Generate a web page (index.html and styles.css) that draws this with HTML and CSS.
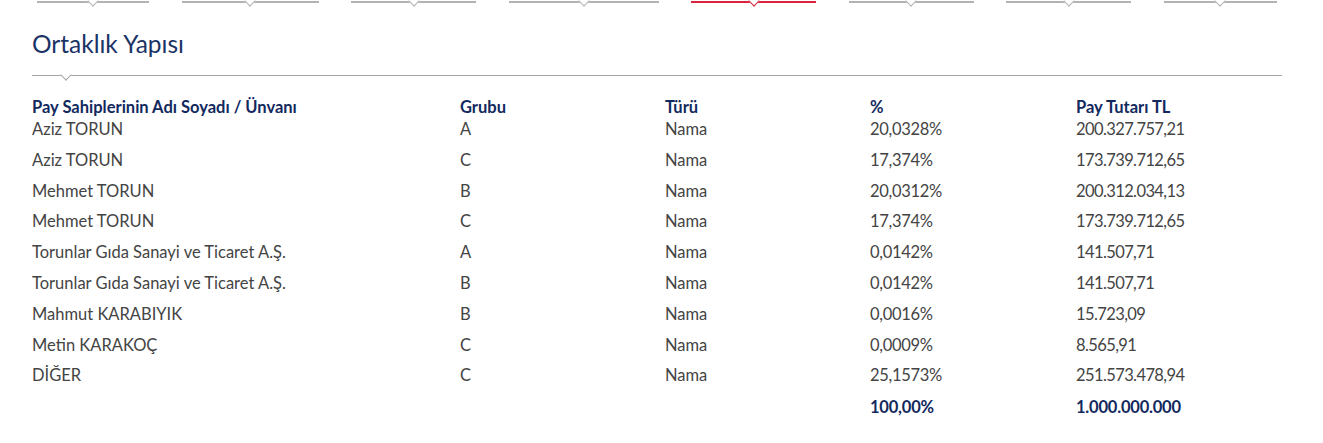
FILE: index.html
```html
<!DOCTYPE html>
<html lang="tr">
<head>
<meta charset="utf-8">
<title>Ortaklık Yapısı</title>
<link rel="stylesheet" href="styles.css">
</head>
<body>
<nav class="tabs">
  <span class="tab w112"></span>
  <span class="tab w137"></span>
  <span class="tab w125"></span>
  <span class="tab w150"></span>
  <span class="tab w125 active"></span>
  <span class="tab w125"></span>
  <span class="tab w125"></span>
  <span class="tab w113"></span>
</nav>
<section class="panel">
  <h2 class="title">Ortaklık Yapısı</h2>
  <div class="divider"></div>
  <table class="grid">
    <thead>
      <tr><th class="c1">Pay Sahiplerinin Adı Soyadı / Ünvanı</th><th class="c2">Grubu</th><th class="c3">Türü</th><th class="c4">%</th><th class="c5">Pay Tutarı TL</th></tr>
    </thead>
    <tbody>
      <tr><td>Aziz TORUN</td><td>A</td><td>Nama</td><td>20,0328%</td><td>200.327.757,21</td></tr>
      <tr><td>Aziz TORUN</td><td>C</td><td>Nama</td><td>17,374%</td><td>173.739.712,65</td></tr>
      <tr><td>Mehmet TORUN</td><td>B</td><td>Nama</td><td>20,0312%</td><td>200.312.034,13</td></tr>
      <tr><td>Mehmet TORUN</td><td>C</td><td>Nama</td><td>17,374%</td><td>173.739.712,65</td></tr>
      <tr><td>Torunlar Gıda Sanayi ve Ticaret A.Ş.</td><td>A</td><td>Nama</td><td>0,0142%</td><td>141.507,71</td></tr>
      <tr><td>Torunlar Gıda Sanayi ve Ticaret A.Ş.</td><td>B</td><td>Nama</td><td>0,0142%</td><td>141.507,71</td></tr>
      <tr><td>Mahmut KARABIYIK</td><td>B</td><td>Nama</td><td>0,0016%</td><td>15.723,09</td></tr>
      <tr><td>Metin KARAKOÇ</td><td>C</td><td>Nama</td><td>0,0009%</td><td>8.565,91</td></tr>
      <tr><td>DİĞER</td><td>C</td><td>Nama</td><td>25,1573%</td><td>251.573.478,94</td></tr>
      <tr class="total"><td></td><td></td><td></td><td>100,00%</td><td>1.000.000.000</td></tr>
    </tbody>
  </table>
</section>
</body>
</html>
```
FILE: styles.css
```css
* { box-sizing: border-box; }
html, body { margin: 0; padding: 0; background: #fff; }
body {
  font-family: Lato, "Open Sans", "Liberation Sans", sans-serif;
  color: #444;
  width: 1323px;
  height: 443px;
  overflow: hidden;
}
.tabs {
  display: flex;
  gap: 32.5px;
  padding-left: 37px;
  height: 8px;
}
.tab {
  position: relative;
  display: block;
  height: 2px;
  margin-top: 1px;
  background: #b3b3b3;
}
.tab::after {
  content: "";
  position: absolute;
  left: 50%;
  top: -4px;
  width: 7px;
  height: 7px;
  margin-left: -4px;
  border-right: 1.5px solid #b3b3b3;
  border-bottom: 1.5px solid #b3b3b3;
  background: #fff;
  transform: rotate(45deg);
}
.tab.active { background: #d9233d; }
.tab.active::after { border-color: #d9233d; }
.w112 { width: 112px; }
.w113 { width: 113px; }
.w125 { width: 125px; }
.w137 { width: 137px; }
.w150 { width: 150px; }

.panel { padding: 0 41px 0 32px; }
.title {
  margin: 21px 0 0;
  font-size: 24.5px;
  font-weight: 400;
  color: #1b3466;
  line-height: 30px;
}
.divider {
  position: relative;
  margin-top: 16px;
  height: 1px;
  background: #a5a5a5;
}
.divider::after {
  content: "";
  position: absolute;
  left: 30px;
  top: -4px;
  width: 7px;
  height: 7px;
  border-right: 1px solid #a5a5a5;
  border-bottom: 1px solid #a5a5a5;
  background: #fff;
  transform: rotate(45deg);
}
.grid {
  margin-top: 21px;
  border-collapse: collapse;
  width: 1250px;
  table-layout: fixed;
  font-size: 16.5px;
}
.grid th {
  text-align: left;
  font-weight: 700;
  color: #12295e;
  padding: 0;
  height: 21px;
  line-height: 21px;
}
.grid td {
  padding: 0;
  height: 30.8px;
  line-height: 22px;
  vertical-align: top;
  color: #444;
}
.grid td:nth-child(4) { letter-spacing: -0.3px; }
.grid td:nth-child(5) { letter-spacing: -0.6px; }
.c1 { width: 428px; }
.c2 { width: 205px; }
.c3 { width: 205px; }
.c4 { width: 206px; }
.grid tr.total td { font-weight: 700; color: #12295e; padding-top: 1px; letter-spacing: -0.2px; }
```
